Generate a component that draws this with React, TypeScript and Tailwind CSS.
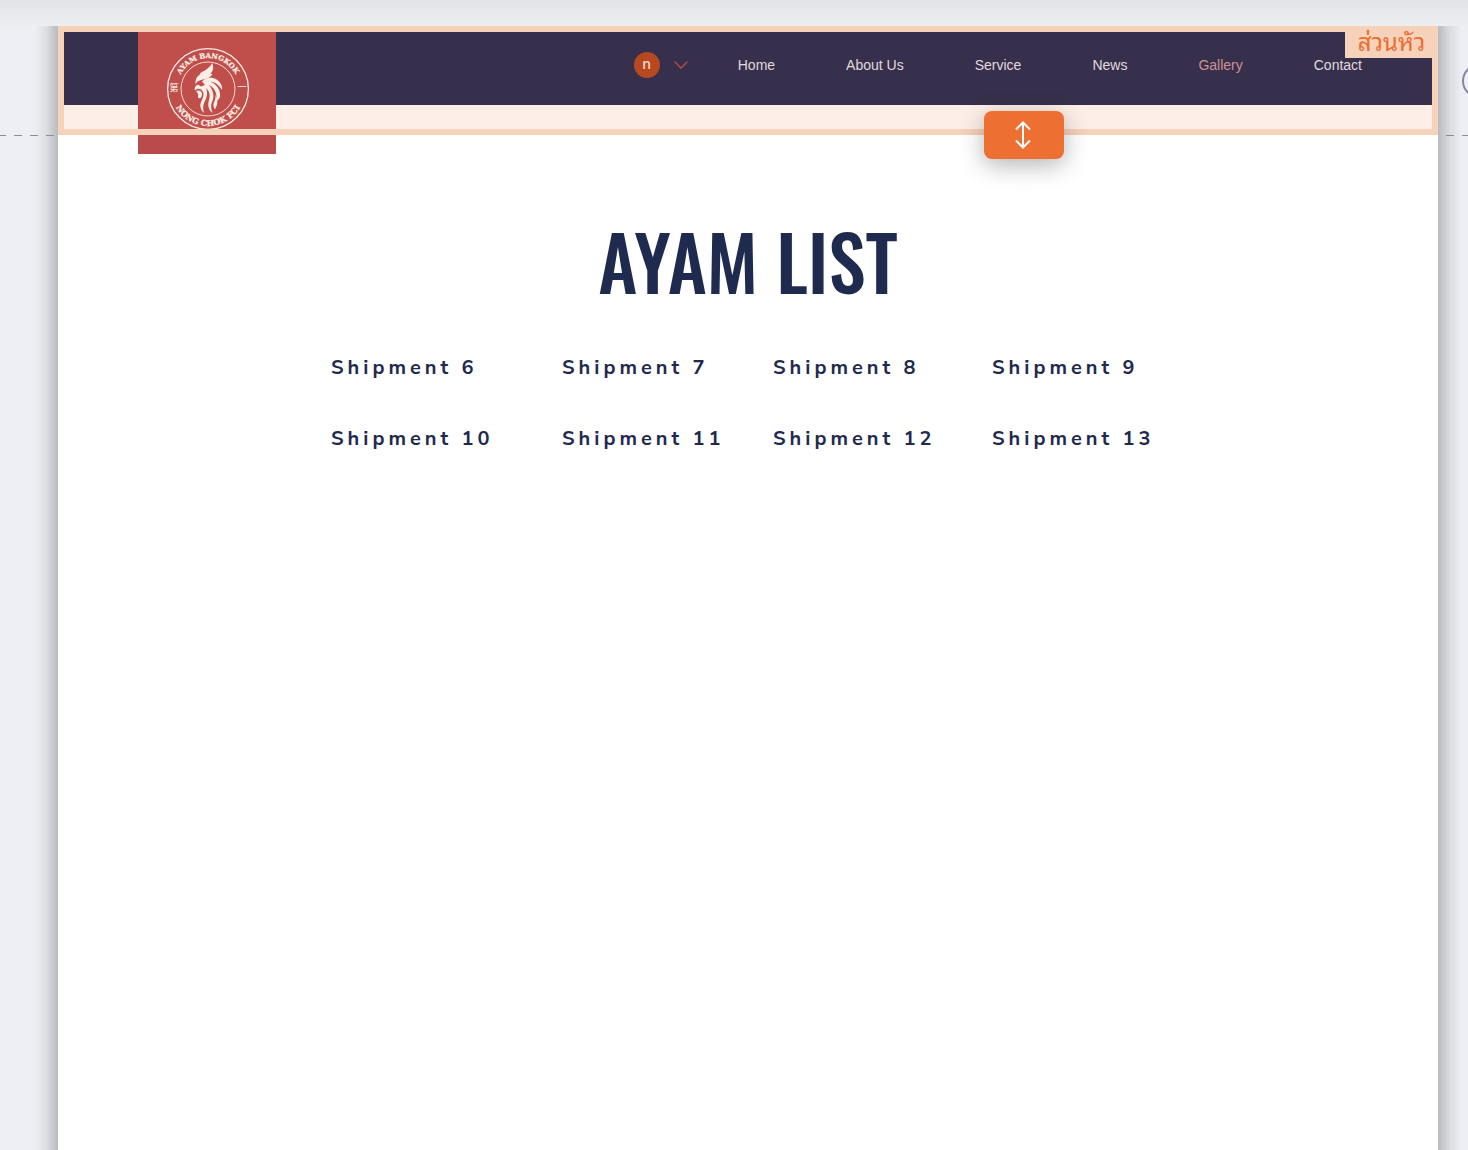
const navItems = ["Home", "About Us", "Service", "News", "Gallery", "Contact"];

const shipments = [6, 7, 8, 9, 10, 11, 12, 13];

function RoosterLogo() {
  return (
    <svg viewBox="0 0 84 84" className="h-[84px] w-[84px]" role="img" aria-label="Ayam Bangkok Nong Chok FCI">
      <defs>
        <path id="arc-top" d="M11 42 A31 31 0 0 1 73 42" />
        <path id="arc-bottom" d="M5 42 A37 37 0 0 0 79 42" />
      </defs>
      <g fill="none" stroke="#fbe9e3">
        <circle cx="42" cy="42" r="40.4" strokeWidth="1.3" />
        <circle cx="42" cy="42" r="27" strokeWidth="0.9" />
      </g>
      <g
        fill="#fdeee8"
        stroke="#fdeee8"
        strokeWidth="0.25"
        fontFamily="'DejaVu Serif', serif"
        fontWeight="700"
        textAnchor="middle"
      >
        <text fontSize="7">
          <textPath href="#arc-top" startOffset="50%">AYAM BANGKOK</textPath>
        </text>
        <text fontSize="8">
          <textPath href="#arc-bottom" startOffset="50%">NONG CHOK FCI</textPath>
        </text>
      </g>
      <g fill="#f8ddd6" fontFamily="'Noto Sans CJK TC', sans-serif" fontSize="9" fontWeight="500" textAnchor="middle">
        <text x="8" y="44">第</text>
        <text x="76" y="43">一</text>
      </g>
      <g fill="#fdeee8">
        <path d="M46.300 16 C44 20 41 22 38 24 C35 25 34 26 33.500 28 C31 29 29.500 32 29.300 37.500 C31 34 34 33 37 32.500 C41 32 45 30 46.500 27 C45.500 27 45 27 44.500 27 C47 24 48 20 46.300 16 Z" />
        <path d="M36 34.500 C39 31 43 30 47 31 C53 32.500 57 38 56 43 C53 38 49 35 44 34.500 C50 37 55 42 54 50 C53 52 52 53 50.500 54 C51.500 47 49 41 43 38 C47 43 49 49 46 55 C44.500 59 45 62 46.500 66 C42.500 63 41.500 58 43 53 C44.500 48 43.500 44 40 41 C42 46 41 50 38.500 55 C36.500 59 37 62 38 66 C34 62 33.500 58 35.500 54 C38 49 38.500 45 35 42.500 C33 41.500 31 41.500 29 43.500 C28 41 29.500 38.500 32 37.500 L35 39.500 L39 38 Z" />
        <path d="M30 44 C33 42.500 36 44 36 47 C36 50 34.500 52 32.500 51 C31.500 50 32.500 48.500 32 47 C31.500 45.500 30.500 45 30 44 Z" />
        <path d="M49.500 48 C50 53 47.500 55 47.500 58 C47.500 60 48 61 49 62.500 C51.500 58 52.500 53 49.500 48 Z" />
      </g>
    </svg>
  );
}

function Header() {
  return (
    <header className="relative bg-[#fdefe7] pb-[30px]">
      <div className="flex h-[79px] items-center justify-end bg-[#36304c] pr-[76px]">
        <button type="button" aria-label="Account menu" className="mr-[50px] flex items-center gap-[14px] pb-[2px]">
          <span className="flex size-[26px] items-center justify-center rounded-full bg-[#b84820] pb-[2px] font-['Noto_Sans'] text-[14px] leading-none font-medium text-[#f7ddd0]">
            n
          </span>
          <svg viewBox="0 0 14 8" className="h-2 w-[14px]" fill="none" stroke="#b94b4d" strokeWidth="1.300">
            <path d="M0.500 0.500 L7 7 L13.500 0.500" />
          </svg>
        </button>
        <nav className="flex gap-[71px] text-[14px]" aria-label="Main">
          {navItems.map((item) => (
            <a key={item} href="#" className={item === "Gallery" ? "text-[#cf9292]" : "text-[#e2dade]"}>
              {item}
            </a>
          ))}
        </nav>
      </div>

      <a
        href="#"
        className="absolute top-[6px] left-[80px] flex h-[122px] w-[138px] justify-center bg-linear-to-b from-[#c04f4b] from-80% to-[#b94b4d] to-85% pt-[15px] pl-[2px]"
      >
        <RoosterLogo />
      </a>

      <div className="pointer-events-none absolute inset-0 border-[6px] border-[#f6d2bb]" />
      <span className="absolute top-0 right-0 flex h-8 w-[93px] items-center justify-center bg-[#f6d2bb] pb-1 font-['Noto_Sans_Thai_Looped','Loma','Noto_Sans_Thai','Noto_Sans',sans-serif] text-[24px] leading-none text-[#ed6e30]">
        ส่วนหัว
      </span>
      <button
        type="button"
        aria-label="Resize header"
        className="absolute right-[374px] bottom-[-24px] flex h-12 w-20 items-center justify-center rounded-lg bg-[#ed6f32] pr-[2px] shadow-[0_6px_24px_rgba(0,0,0,0.3)]"
      >
        <svg viewBox="0 0 16 28" className="h-7 w-4" fill="none" stroke="white" strokeWidth="2">
          <path d="M8 1 V27 M1 8.500 L8 1.500 L15 8.500 M1 19.500 L8 26.500 L15 19.500" />
        </svg>
      </button>
    </header>
  );
}

export default function App() {
  return (
    <div className="flex min-h-screen flex-col overflow-hidden bg-[#eeeff4] font-['Liberation_Sans',Arial,sans-serif]">
      <div className="h-[26px] bg-linear-to-b from-[#e1e3e6] to-[#edeef2]" />
      <div className="grid flex-1 grid-cols-[58px_1fr_30px]">
        <div className="bg-linear-to-l from-[#b9babd] via-[#dcdde1] via-20% to-[#eeeff4] to-40%">
          <div className="mt-[109px] mr-1 h-px bg-[repeating-linear-gradient(to_left,#8a8ba3_0_8px,transparent_8px_16px)]" />
        </div>

        <div className="bg-white">
          <Header />
          <main className="px-6 pt-[70px] text-[#1f2a4f]">
            <h1 className="text-center font-['Oswald','Liberation_Sans_Narrow',sans-serif] text-[75px] leading-[112px] font-medium">
              AYAM LIST
            </h1>
            <ul className="mx-auto mt-9 grid max-w-[834px] grid-cols-[231fr_211fr_219fr_173fr] gap-y-[41px] font-['Nunito_Sans','Lato',sans-serif] text-[20px] leading-[30px] font-bold tracking-[4px] whitespace-nowrap">
              {shipments.map((n) => (
                <li key={n}>
                  <a href="#">Shipment {n}</a>
                </li>
              ))}
            </ul>
          </main>
        </div>

        <div className="relative bg-linear-to-r from-[#b9babd] via-[#dcdde1] via-40% to-[#eeeff4] to-80%">
          <button
            type="button"
            aria-label="Add"
            className="absolute top-[38px] left-6 size-[34px] rounded-full border-2 border-[#8586a5]"
          />
          <div className="mt-[109px] ml-2 h-px bg-[repeating-linear-gradient(to_right,#8a8ba3_0_8px,transparent_8px_16px)]" />
        </div>
      </div>
    </div>
  );
}
